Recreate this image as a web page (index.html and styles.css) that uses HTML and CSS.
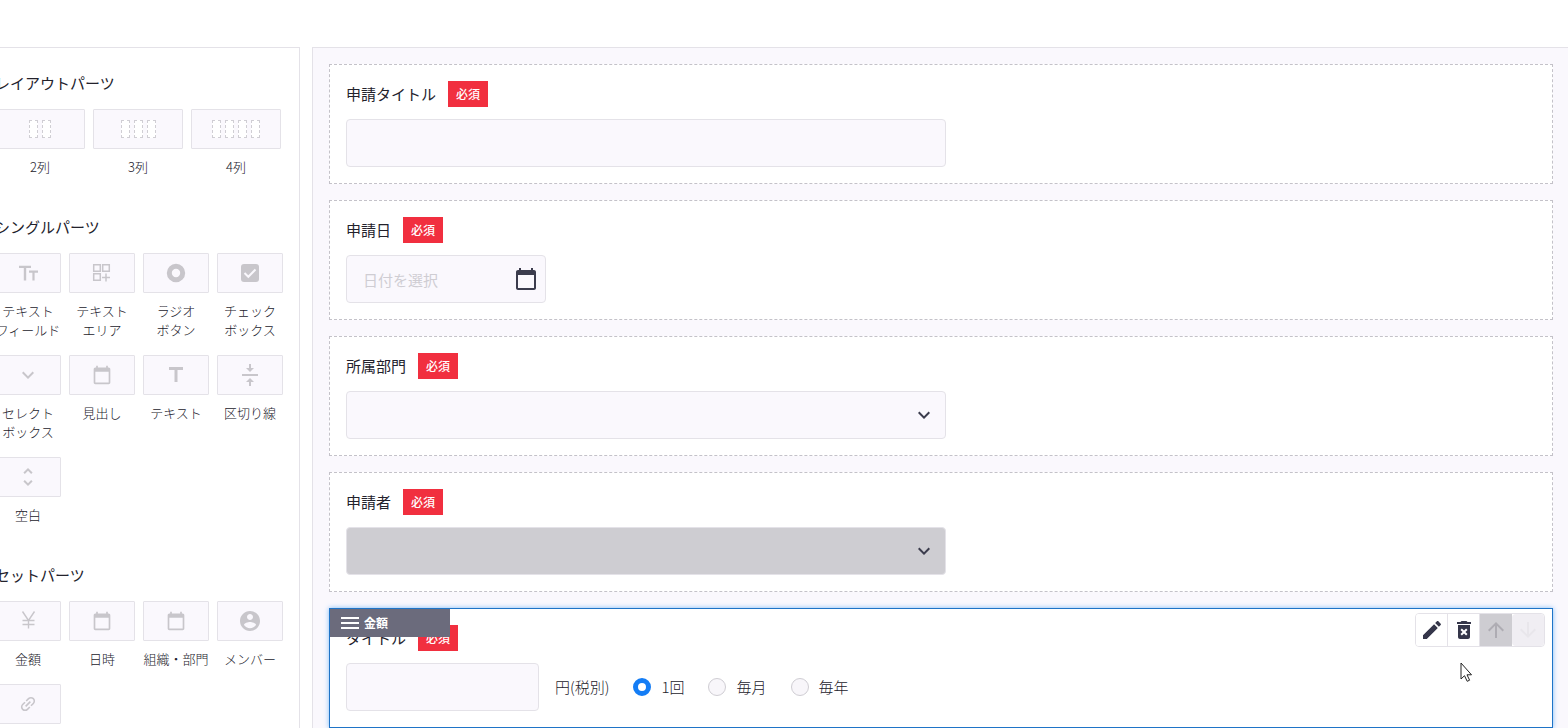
FILE: index.html
```html
<!DOCTYPE html>
<html lang="ja">
<head>
  <meta charset="UTF-8">
  <title>申請フォーム</title>
  <link rel="stylesheet" href="styles.css">
</head>
<body>

  <svg class="symbols" aria-hidden="true">
    <symbol id="i-font" viewBox="0 0 24 24"><path d="M3 4.8h12V7h-4.8v12.6H7.8V7H3zM13 9.6h9v2.2h-3.4v7.8h-2.2v-7.8H13z"/></symbol>
    <symbol id="i-area" viewBox="0 0 24 24"><path d="M3.700 3.700h6.600v6.600H3.700zM12.700 3.700h6.600v6.600h-6.600zM3.700 12.700h6.600v6.600H3.700zM16 12.500v8M12 16.500h8" fill="none" stroke="currentColor" stroke-width="1.500"/></symbol>
    <symbol id="i-radio" viewBox="0 0 24 24"><circle cx="12" cy="12" r="6.7" fill="none" stroke="currentColor" stroke-width="5"/></symbol>
    <symbol id="i-check" viewBox="0 0 24 24"><rect x="3" y="3" width="18" height="18" rx="3"/><path d="M6.500 12l3.800 3.800 7.200-7.300" fill="none" stroke="#faf8fd" stroke-width="2"/></symbol>
    <symbol id="i-down" viewBox="0 0 24 24"><path d="M7.410 8.590L12 13.170l4.590-4.580L18 10l-6 6-6-6z"/></symbol>
    <symbol id="i-calendar" viewBox="0 0 24 24"><path d="M20 3h-1V1h-2v2H7V1H5v2H4c-1.100 0-2 .9-2 2v16c0 1.100.9 2 2 2h16c1.100 0 2-.9 2-2V5c0-1.100-.9-2-2-2zm0 18H4V8h16v13z"/></symbol>
    <symbol id="i-title" viewBox="0 0 24 24"><path d="M5 4v3h5.500v12h3V7H19V4z"/></symbol>
    <symbol id="i-divider" viewBox="0 0 24 24"><path d="M8 19h3v4h2v-4h3l-4-4-4 4zm8-14h-3V1h-2v4H8l4 4 4-4zM4 11v2h16v-2H4z"/></symbol>
    <symbol id="i-blank" viewBox="0 0 24 24"><path d="M12 5.830L15.170 9l1.410-1.410L12 3 7.410 7.590 8.830 9 12 5.830zm0 12.340L8.830 15l-1.410 1.410L12 21l4.590-4.590L15.170 15 12 18.170z"/></symbol>
    <symbol id="i-yen" viewBox="0 0 24 24"><path d="M6.500 2.500l6 9 6-9M12.500 11.500v8M6.500 11.500h12M6.500 15.500h12" fill="none" stroke="currentColor" stroke-width="1.400"/></symbol>
    <symbol id="i-user" viewBox="0 0 24 24"><path d="M12 2C6.480 2 2 6.480 2 12s4.480 10 10 10 10-4.480 10-10S17.520 2 12 2zm0 3c1.660 0 3 1.340 3 3s-1.340 3-3 3-3-1.340-3-3 1.340-3 3-3zm0 14.200c-2.500 0-4.710-1.280-6-3.220.03-1.990 4-3.080 6-3.080 1.990 0 5.970 1.090 6 3.080-1.290 1.940-3.500 3.220-6 3.220z"/></symbol>
    <symbol id="i-link" viewBox="0 0 24 24"><path transform="rotate(-45 12 12)" d="M3.900 12c0-1.710 1.390-3.100 3.100-3.100h4V7H7c-2.760 0-5 2.240-5 5s2.240 5 5 5h4v-1.900H7c-1.710 0-3.100-1.390-3.100-3.100zM8 13h8v-2H8v2zm9-6h-4v1.900h4c1.710 0 3.100 1.390 3.100 3.100s-1.390 3.100-3.100 3.100h-4V17h4c2.760 0 5-2.240 5-5s-2.240-5-5-5z"/></symbol>
    <symbol id="i-edit" viewBox="0 0 24 24"><path d="M3 17.250V21h3.750L17.810 9.940l-3.750-3.750L3 17.250zM20.710 7.040c.39-.39.39-1.020 0-1.410l-2.340-2.340c-.39-.39-1.020-.39-1.410 0l-1.830 1.830 3.750 3.750 1.830-1.830z"/></symbol>
    <symbol id="i-trash" viewBox="0 0 24 24"><path d="M6 19c0 1.100.9 2 2 2h8c1.100 0 2-.9 2-2V7H6v12zm2.460-7.120l1.410-1.410L12 12.590l2.120-2.120 1.410 1.410L13.410 14l2.120 2.120-1.410 1.410L12 15.410l-2.120 2.120-1.410-1.410L10.590 14l-2.130-2.120zM15.500 4l-1-1h-5l-1 1H5v2h14V4z"/></symbol>
    <symbol id="i-up" viewBox="0 0 24 24"><path d="M4 12l1.410 1.410L11 7.830V20h2V7.830l5.580 5.590L20 12l-8-8-8 8z"/></symbol>
    <symbol id="i-menu" viewBox="0 0 24 24"><path d="M3 18h18v-2H3v2zm0-5h18v-2H3v2zm0-7v2h18V6H3z"/></symbol>
  </svg>

  <header class="header"></header>

  <div class="workspace">

    <aside class="sidebar">
      <section class="parts">
        <h2>レイアウトパーツ</h2>
        <div class="grid grid-3">
          <div class="part"><button type="button" aria-labelledby="p1"><i></i><i></i></button><span id="p1">2列</span></div>
          <div class="part"><button type="button" aria-labelledby="p2"><i></i><i></i><i></i></button><span id="p2">3列</span></div>
          <div class="part"><button type="button" aria-labelledby="p3"><i></i><i></i><i></i><i></i></button><span id="p3">4列</span></div>
        </div>
      </section>

      <section class="parts">
        <h2>シングルパーツ</h2>
        <div class="grid">
          <div class="part"><button type="button" aria-labelledby="p4"><svg><use href="#i-font"/></svg></button><span id="p4">テキスト<br>フィールド</span></div>
          <div class="part"><button type="button" aria-labelledby="p5"><svg><use href="#i-area"/></svg></button><span id="p5">テキスト<br>エリア</span></div>
          <div class="part"><button type="button" aria-labelledby="p6"><svg><use href="#i-radio"/></svg></button><span id="p6">ラジオ<br>ボタン</span></div>
          <div class="part"><button type="button" aria-labelledby="p7"><svg><use href="#i-check"/></svg></button><span id="p7">チェック<br>ボックス</span></div>
          <div class="part"><button type="button" aria-labelledby="p8"><svg><use href="#i-down"/></svg></button><span id="p8">セレクト<br>ボックス</span></div>
          <div class="part"><button type="button" aria-labelledby="p9"><svg class="small"><use href="#i-calendar"/></svg></button><span id="p9">見出し</span></div>
          <div class="part"><button type="button" aria-labelledby="p10"><svg><use href="#i-title"/></svg></button><span id="p10">テキスト</span></div>
          <div class="part"><button type="button" aria-labelledby="p11"><svg><use href="#i-divider"/></svg></button><span id="p11">区切り線</span></div>
          <div class="part"><button type="button" aria-labelledby="p12"><svg><use href="#i-blank"/></svg></button><span id="p12">空白</span></div>
        </div>
      </section>

      <section class="parts">
        <h2>セットパーツ</h2>
        <div class="grid">
          <div class="part"><button type="button" aria-labelledby="p13"><svg><use href="#i-yen"/></svg></button><span id="p13">金額</span></div>
          <div class="part"><button type="button" aria-labelledby="p14"><svg class="small"><use href="#i-calendar"/></svg></button><span id="p14">日時</span></div>
          <div class="part"><button type="button" aria-labelledby="p15"><svg class="small"><use href="#i-calendar"/></svg></button><span id="p15">組織・部門</span></div>
          <div class="part"><button type="button" aria-labelledby="p16"><svg><use href="#i-user"/></svg></button><span id="p16">メンバー</span></div>
          <div class="part"><button type="button" aria-label="リンク"><svg class="small"><use href="#i-link"/></svg></button></div>
        </div>
      </section>
    </aside>

    <main class="canvas">
      <div class="card">
        <div class="card-head"><label for="title">申請タイトル</label><span class="required">必須</span></div>
        <input class="field" id="title" type="text">
      </div>

      <div class="card">
        <div class="card-head"><label for="date">申請日</label><span class="required">必須</span></div>
        <div class="control control-date">
          <input class="field" id="date" type="text" placeholder="日付を選択">
          <svg><use href="#i-calendar"/></svg>
        </div>
      </div>

      <div class="card">
        <div class="card-head"><label for="dept">所属部門</label><span class="required">必須</span></div>
        <div class="control">
          <select class="field" id="dept"><option></option></select>
          <svg><use href="#i-down"/></svg>
        </div>
      </div>

      <div class="card">
        <div class="card-head"><label for="member">申請者</label><span class="required">必須</span></div>
        <div class="control">
          <select class="field" id="member" disabled><option></option></select>
          <svg><use href="#i-down"/></svg>
        </div>
      </div>

      <div class="card active">
        <div class="card-head"><label for="price">タイトル</label><span class="required">必須</span></div>
        <div class="price">
          <input class="field" id="price" type="text">
          <span>円(税別)</span>
          <label><input type="radio" name="cycle" checked>1回</label>
          <label><input type="radio" name="cycle">毎月</label>
          <label><input type="radio" name="cycle">毎年</label>
        </div>

        <div class="handle"><svg><use href="#i-menu"/></svg>金額</div>
        <div class="tools">
          <button type="button" aria-label="編集"><svg><use href="#i-edit"/></svg></button>
          <button type="button" aria-label="削除"><svg><use href="#i-trash"/></svg></button>
          <button type="button" class="up" aria-label="上へ"><svg><use href="#i-up"/></svg></button>
          <button type="button" class="down" aria-label="下へ" disabled><svg><use href="#i-up"/></svg></button>
        </div>
        <svg class="cursor" viewBox="0 0 12 20"><path d="M1 1v16l3.500-3.300 2.700 5.600 2.400-1.100-2.600-5.400H11.500z" fill="#fff" stroke="#222" stroke-width="1"/></svg>
      </div>
    </main>

  </div>

</body>
</html>
```
FILE: styles.css
```css
*{
  margin: 0;
  padding: 0;
  box-sizing: border-box;
}

body{
  height: 100vh;
  display: flex;
  flex-direction: column;
  overflow: hidden;
  background-color: #ffffff;
  color: #23222c;
  font: 15px/22px "Noto Sans CJK JP", sans-serif;
}

button, input, select{
  font: inherit;
  color: inherit;
}

svg{
  width: 24px;
  height: 24px;
  flex: none;
  fill: currentColor;
}

.symbols{
  display: none;
}

.header{
  flex: none;
  height: 47px;
}

/* the parts list starts a little outside the left edge */
.workspace{
  flex: 1;
  min-height: 0;
  display: flex;
  gap: 12px;
  margin-left: -22px;
}

/* sidebar */
.sidebar{
  flex: none;
  width: 322px;
  padding: 24px 16px 0;
  border: 1px solid #e4e2e8;
  border-bottom: 0;
  overflow: hidden;
}

.parts{
  margin-bottom: 40px;
}

.parts h2{
  margin-bottom: 15px;
  font-size: 15px;
  font-weight: 400;
}

.grid{
  display: grid;
  grid-template-columns: repeat(4, 66px);
  gap: 16px 8px;
}

.grid-3{
  grid-template-columns: repeat(3, 90px);
}

.part{
  display: flex;
  flex-direction: column;
  gap: 8px;
  font-size: 13px;
  font-weight: 300;
  line-height: 19px;
  text-align: center;
  white-space: nowrap;
  color: #23222c;
}

.part button{
  height: 40px;
  display: flex;
  align-items: center;
  justify-content: center;
  gap: 4px;
  background-color: #faf8fd;
  border: 1px solid #e4e2e8;
  border-radius: 1px;
  color: #c8c6cb;
}

.part button i{
  width: 9px;
  height: 18px;
  background-color: #ffffff;
  border: 1px dashed #d0ced4;
}

.part .small{
  width: 20px;
  height: 20px;
}

/* form */
.canvas{
  flex: 1;
  min-width: 0;
  display: flex;
  flex-direction: column;
  gap: 16px;
  padding: 16px 15px 0 16px;
  background-color: #faf8fd;
  border-top: 1px solid #e4e2e8;
  border-left: 1px solid #e4e2e8;
}

.card{
  flex: none;
  padding: 16px;
  background-color: #ffffff;
  border: 1px dashed #c4c2c9;
}

.card-head{
  display: flex;
  align-items: center;
  gap: 12px;
  margin-bottom: 12px;
}

.required{
  padding: 0 8px;
  background-color: #f12f3f;
  color: #ffffff;
  font-size: 12px;
  font-weight: 500;
  line-height: 26px;
}

.field{
  display: block;
  width: 100%;
  max-width: 600px;
  height: 48px;
  padding: 0 16px;
  background-color: #faf8fd;
  border: 1px solid #e4e2e8;
  border-radius: 4px;
  appearance: none;
}

.field::placeholder{
  color: #cfcdd3;
}

.field:disabled{
  background-color: #cecdd2;
  opacity: 1;
}

.control{
  position: relative;
  max-width: 600px;
}

.control-date{
  max-width: 200px;
}

.control svg{
  position: absolute;
  top: 12px;
  right: 10px;
  color: #3b3c4d;
  pointer-events: none;
}

.control-date svg{
  right: 8px;
}

/* selected card */
.active{
  position: relative;
  border: 1px solid #1f74c7;
  box-shadow: 0 0 5px #7ebcf8;
}

.price{
  display: flex;
  align-items: center;
  gap: 24px;
  font-weight: 300;
}

.price .field{
  width: 193px;
  margin-right: -8px;
}

.price label{
  display: flex;
  align-items: center;
  gap: 10px;
}

.price input[type="radio"]{
  width: 18px;
  height: 18px;
  appearance: none;
  background-color: #f8f6fa;
  border: 1px solid #cfcdd3;
  border-radius: 50%;
}

.price input[type="radio"]:checked{
  background-color: #ffffff;
  border: 5px solid #147df5;
}

.handle{
  position: absolute;
  top: 0;
  left: 0;
  width: 120px;
  height: 28px;
  display: flex;
  align-items: center;
  gap: 2px;
  padding-left: 8px;
  background-color: #6b6b7c;
  color: #ffffff;
  font-size: 12px;
  font-weight: 700;
}

.tools{
  position: absolute;
  top: 4px;
  right: 7px;
  height: 34px;
  display: flex;
  border: 1px solid #e4e2e8;
  border-radius: 4px;
  overflow: hidden;
}

.tools button{
  width: 32px;
  display: flex;
  align-items: center;
  justify-content: center;
  background-color: #ffffff;
  border: 0;
  border-right: 1px solid #e4e2e8;
  color: #35364a;
}

.tools .up{
  background-color: #cecdd2;
  border: 0;
  color: #aeacb3;
}

.tools .down{
  background-color: #f0eef3;
  border: 0;
  border-radius: 4px;
  color: #e8e6eb;
}

.tools .down svg{
  transform: rotate(180deg);
}

.cursor{
  position: absolute;
  top: 53px;
  right: 80px;
  width: 12px;
  height: 20px;
}
```
